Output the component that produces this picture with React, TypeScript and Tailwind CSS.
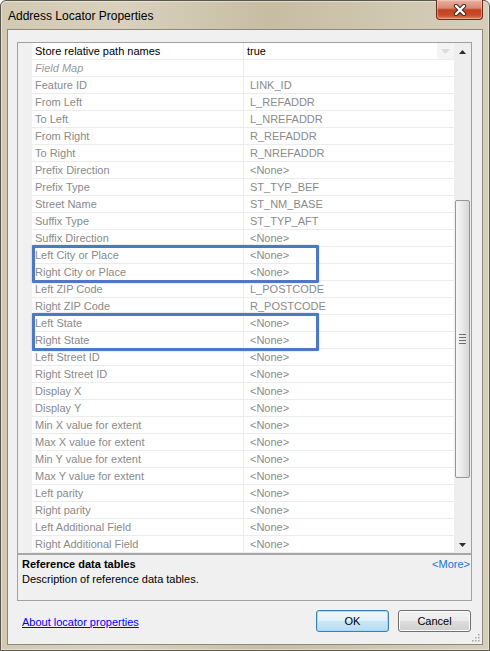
const rows: [string, string][] = [
  ["Store relative path names", "true"],
  ["Field Map", ""],
  ["Feature ID", "LINK_ID"],
  ["From Left", "L_REFADDR"],
  ["To Left", "L_NREFADDR"],
  ["From Right", "R_REFADDR"],
  ["To Right", "R_NREFADDR"],
  ["Prefix Direction", "<None>"],
  ["Prefix Type", "ST_TYP_BEF"],
  ["Street Name", "ST_NM_BASE"],
  ["Suffix Type", "ST_TYP_AFT"],
  ["Suffix Direction", "<None>"],
  ["Left City or Place", "<None>"],
  ["Right City or Place", "<None>"],
  ["Left ZIP Code", "L_POSTCODE"],
  ["Right ZIP Code", "R_POSTCODE"],
  ["Left State", "<None>"],
  ["Right State", "<None>"],
  ["Left Street ID", "<None>"],
  ["Right Street ID", "<None>"],
  ["Display X", "<None>"],
  ["Display Y", "<None>"],
  ["Min X value for extent", "<None>"],
  ["Max X value for extent", "<None>"],
  ["Min Y value for extent", "<None>"],
  ["Max Y value for extent", "<None>"],
  ["Left parity", "<None>"],
  ["Right parity", "<None>"],
  ["Left Additional Field", "<None>"],
  ["Right Additional Field", "<None>"],
];

function PropRow({ name, value, index }: { name: string; value: string; index: number }) {
  const editable = index === 0;
  const category = index === 1;
  return (
    <div className="flex h-[17px] border-b border-[#ececec] bg-white leading-[16px]">
      <div
        className={
          "w-[212px] shrink-0 border-r border-[#ececec] pl-[3px] whitespace-nowrap " +
          (editable ? "text-black" : category ? "italic text-[#9a9a9a]" : "text-[#8a8a8a]")
        }
      >
        {name}
      </div>
      <div className={"flex flex-1 " + (editable ? "pl-[3px] text-black" : "pl-[6px] text-[#8a8a8a]")}>
        <span className="flex-1 whitespace-nowrap">{value}</span>
        {editable && (
          <span className="flex w-[17px] items-center justify-center bg-[#f4f4f4]">
            <svg width="9" height="5" viewBox="0 0 9 5">
              <polygon points="0,0 9,0 4.5,5" fill="#dcdcdc" />
            </svg>
          </span>
        )}
      </div>
    </div>
  );
}

function Arrow({ up }: { up?: boolean }) {
  return (
    <div className="flex h-[17px] items-center justify-center">
      <svg width="7" height="4" viewBox="0 0 7 4">
        <polygon points={up ? "3.5,0 7,4 0,4" : "0,0 7,0 3.5,4"} fill="#2b2b2b" />
      </svg>
    </div>
  );
}

function ScrollBar() {
  return (
    <div className="flex w-[17px] shrink-0 flex-col bg-[#eeeeee]">
      <Arrow up />
      <div className="flex-1 px-[1px]">
        {/* thumb */}
        <div className="mt-[140px] flex h-[278px] flex-col items-center justify-center gap-[2px] rounded-[2px] border border-[#969696] bg-[linear-gradient(90deg,#f7f7f7_0%,#e9e9e9_50%,#d6d6d6_100%)]">
          <div className="h-[1px] w-[7px] bg-[#6f6f6f]" />
          <div className="h-[1px] w-[7px] bg-[#6f6f6f]" />
          <div className="h-[1px] w-[7px] bg-[#6f6f6f]" />
          <div className="h-[1px] w-[7px] bg-[#6f6f6f]" />
        </div>
      </div>
      <Arrow />
    </div>
  );
}

function Button({ label, focused }: { label: string; focused?: boolean }) {
  return (
    <button
      className={
        "h-[22px] w-[73px] rounded-[3px] border text-[11px] text-black " +
        (focused
          ? "border-[#3c7fb1] bg-[linear-gradient(180deg,#eef8fd_0%,#e0f1fb_48%,#c9e6f7_52%,#b7dcf2_100%)] shadow-[inset_0_0_0_1px_#a8d8f3]"
          : "border-[#707070] bg-[linear-gradient(180deg,#f2f2f2_0%,#ebebeb_48%,#dddddd_52%,#cfcfcf_100%)] shadow-[inset_0_0_0_1px_#fbfbfb]")
      }
    >
      {label}
    </button>
  );
}

export default function App() {
  return (
    <div className="h-[651px] w-[490px] overflow-hidden font-['Liberation_Sans',Arial,sans-serif] text-[11px]">
      {/* window frame */}
      <div className="flex h-full w-full flex-col rounded-t-[6px] border border-[#5b564b] bg-[linear-gradient(90deg,#d2c9b3_0%,#d9d1bd_25%,#c7bda3_55%,#d0c7b0_80%,#d6ceba_100%)] shadow-[inset_0_0_0_1px_rgba(255,255,255,0.45)]">
        {/* title bar */}
        <div className="flex h-[28px] shrink-0 items-start justify-between">
          <span className="pl-[7px] pt-[6px] text-[12px] text-black">Address Locator Properties</span>
          <div className="-mt-[1px] mr-[6px] flex h-[20px] w-[47px] items-center justify-center rounded-b-[4px] border border-t-0 border-[#6b2a1c] bg-[linear-gradient(180deg,#eab0a2_0%,#d88a75_42%,#c4421f_52%,#c84a2a_78%,#e27f58_100%)] shadow-[inset_0_0_0_1px_rgba(255,220,210,0.45)]">
            <svg width="14" height="12" viewBox="0 0 14 12">
              <path d="M3 2 L11 10 M11 2 L3 10" stroke="#3a2a26" strokeWidth="4.4" strokeLinecap="round" />
              <path d="M3 2 L11 10 M11 2 L3 10" stroke="#ffffff" strokeWidth="2.4" strokeLinecap="round" />
            </svg>
          </div>
        </div>

        {/* client area */}
        <div className="relative mx-[6px] flex h-[616px] flex-col border border-[#8c887c] bg-[#f0f0f0] pl-[9px] pr-[10px] pt-[12px]">
          {/* property grid + help pane */}
          <div className="flex h-[559px] w-[455px] flex-col border border-[#a0a0a0]">
            <div className="flex h-[510px]">
              <div className="w-[14px] shrink-0 bg-[#f0f0f0]" />
              <div className="relative flex-1">
                {rows.map(([name, value], i) => (
                  <PropRow key={name} name={name} value={value} index={i} />
                ))}
                {/* highlight boxes */}
                <div className="absolute left-0 top-[202px] h-[38px] w-[287px] rounded-[1px] border-[3px] border-[#4f78c4] shadow-[0_0_2px_rgba(40,70,140,0.35)]" />
                <div className="absolute left-0 top-[270px] h-[38px] w-[287px] rounded-[1px] border-[3px] border-[#4f78c4] shadow-[0_0_2px_rgba(40,70,140,0.35)]" />
              </div>
              <ScrollBar />
            </div>
            <div className="flex h-[47px] flex-col border-t-2 border-[#a7a7a7] pl-[4px] pr-[1px] pt-[2px] leading-[15px]">
              <div className="flex justify-between">
                <span className="font-bold text-black">Reference data tables</span>
                <span className="text-[#1f6fd8]">&lt;More&gt;</span>
              </div>
              <span className="text-black">Description of reference data tables.</span>
            </div>
          </div>

          {/* footer */}
          <div className="mt-[9px] flex items-center">
            <a className="pl-[5px] pt-[2px] text-[#0000ff] underline">About locator properties</a>
            <div className="ml-auto mr-[1px] flex gap-[9px]">
              <Button label="OK" focused />
              <Button label="Cancel" />
            </div>
          </div>

          {/* size grip */}
          <svg className="absolute bottom-[2px] right-[2px]" width="10" height="10" viewBox="0 0 10 10">
            {[
              [8, 2],
              [5, 5],
              [8, 5],
              [2, 8],
              [5, 8],
              [8, 8],
            ].map(([x, y]) => (
              <rect key={`${x}-${y}`} x={x} y={y} width="1.5" height="1.5" fill="#a3a3a3" />
            ))}
          </svg>
        </div>
      </div>
    </div>
  );
}
